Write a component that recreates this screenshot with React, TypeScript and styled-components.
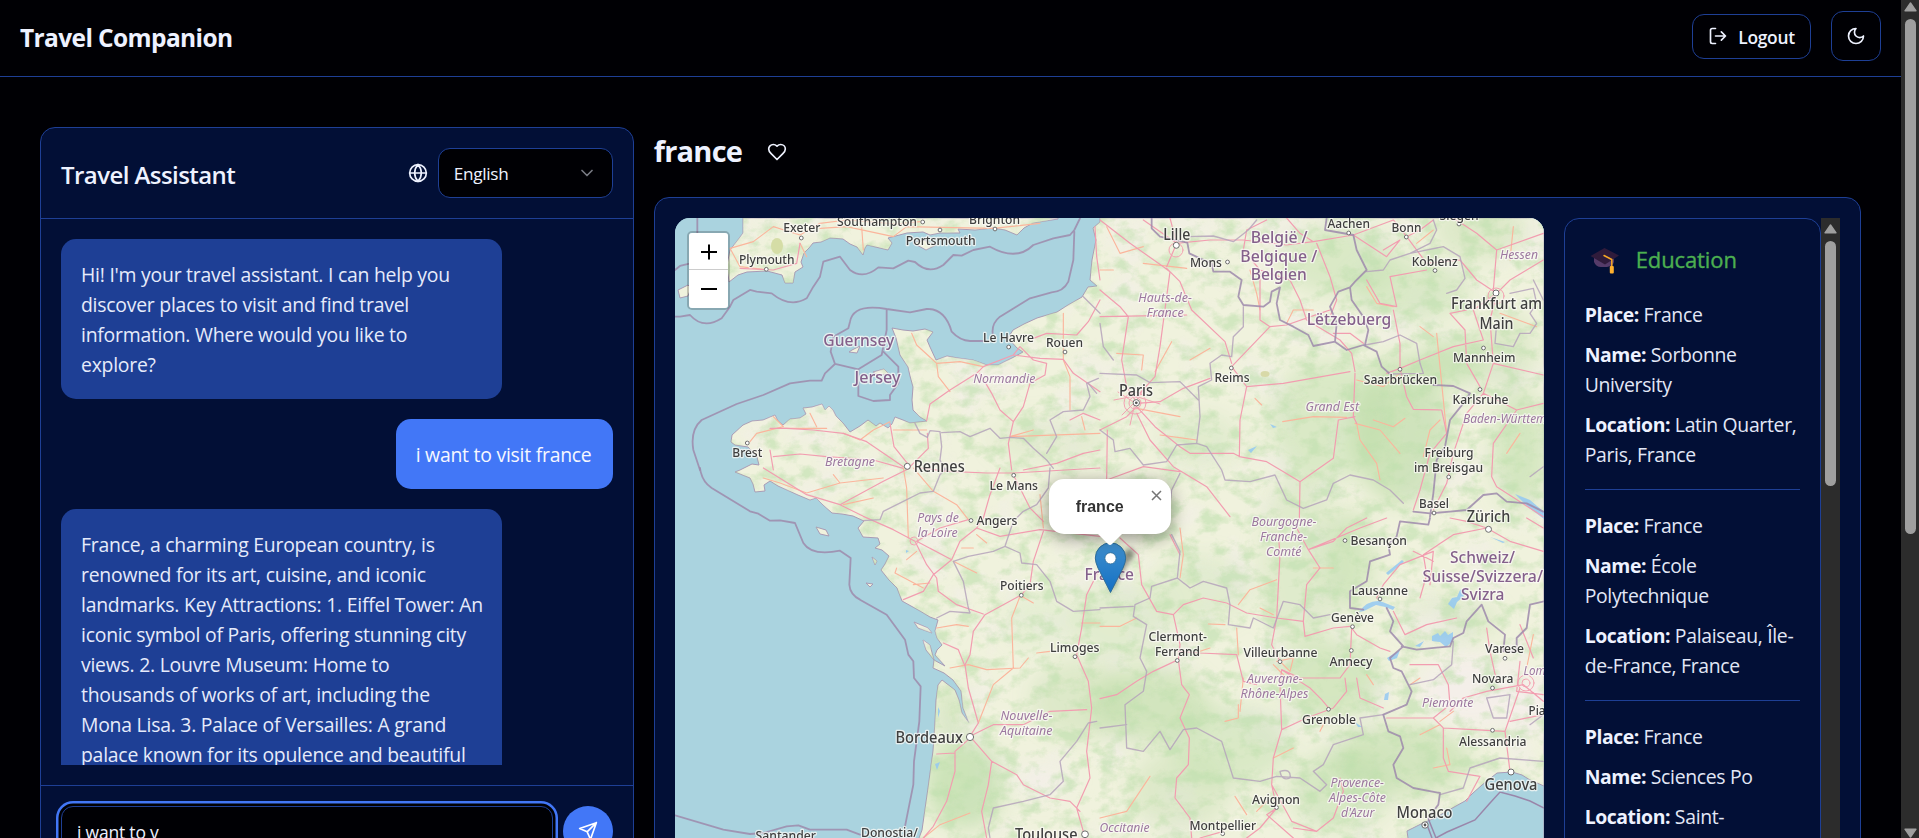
import React from "react";
import styled, { createGlobalStyle } from "styled-components";

const c = {
  bg: "#000004",
  card: "#020f36",
  border: "#1e3f95",
  primary: "#4277f7",
  text: "#eef2ff",
};

const GlobalStyle = createGlobalStyle`
  * { box-sizing: border-box; }
  body { margin: 0; background: ${c.bg}; overflow: hidden; color: ${c.text};
    font-family: "Open Sans", "Noto Sans", sans-serif; font-size: 19.4px; line-height: 30px; }
  p, h1, h2, h3 { margin: 0; }
`;

/* ---------- page frame ---------- */
const Window = styled.div`
  display: flex;
  height: 100vh;
  overflow: hidden;
`;
const Page = styled.div`
  flex: 1;
  min-width: 0;
`;
const Header = styled.header`
  display: flex;
  align-items: center;
  justify-content: space-between;
  height: 77px;
  padding: 0 20px 4px;
  border-bottom: 1px solid ${c.border};
`;
const Brand = styled.h1`
  font-size: 24.5px;
  font-weight: 700;
  line-height: 32px;
  letter-spacing: -0.62px;
  padding-top: 4px;
`;
const Actions = styled.div`
  display: flex;
  align-items: center;
  gap: 20px;
`;
const OutlineButton = styled.button<{ $square?: boolean }>`
  display: flex;
  align-items: center;
  justify-content: center;
  gap: 10px;
  width: ${(p) => (p.$square ? "50px" : "119px")};
  height: ${(p) => (p.$square ? "50px" : "45px")};
  padding: 0;
  border: 1px solid ${c.border};
  border-radius: 12px;
  background: transparent;
  color: ${c.text};
  font: 600 17.4px/25px "Open Sans", sans-serif;
  letter-spacing: -0.3px;
`;
const ButtonText = styled.span`
  padding-top: 2px;
`;
const Main = styled.main`
  display: grid;
  grid-template-columns: repeat(3, minmax(0, 1fr));
  column-gap: 20px;
  padding: 50px 40px 0;
`;

/* ---------- scroll bars ---------- */
const Track = styled.div<{ $w: number }>`
  flex: none;
  width: ${(p) => p.$w}px;
  display: flex;
  flex-direction: column;
  align-items: center;
  background: #2c2c2c;
`;
const Arrow = styled.svg<{ $top: number }>`
  flex: none;
  display: block;
  width: 13px;
  height: 10px;
  margin-top: ${(p) => p.$top}px;
`;
const Thumb = styled.div<{ $h: number }>`
  flex: none;
  width: 11px;
  height: ${(p) => p.$h}px;
  margin-top: 7px;
  border-radius: 6px;
  background: #9f9f9f;
`;
const Fill = styled.div`
  flex: 1;
`;
const UpArrow = ({ top }: { top: number }) => (
  <Arrow $top={top} viewBox="0 0 13 10">
    <path d="M6.5 1 12 8.8H1Z" fill="#9f9f9f" stroke="#9f9f9f" strokeWidth="1.4" strokeLinejoin="round" />
  </Arrow>
);

/* ---------- icons ---------- */
const Glyph = styled.svg<{ $dim?: boolean }>`
  flex: none;
  width: 20px;
  height: 20px;
  fill: none;
  stroke: currentColor;
  stroke-width: 2;
  stroke-linecap: round;
  stroke-linejoin: round;
  opacity: ${(p) => (p.$dim ? 0.5 : 1)};
`;
const Icon = ({ d, dim, children }: { d: string; dim?: boolean; children?: React.ReactNode }) => (
  <Glyph viewBox="0 0 24 24" $dim={dim}>
    <path d={d} />
    {children}
  </Glyph>
);

/* ---------- chat ---------- */
const Chat = styled.section`
  height: 760px;
  border: 1px solid ${c.border};
  border-radius: 15px;
  background: ${c.card};
`;
const ChatHead = styled.div`
  display: flex;
  align-items: center;
  height: 91px;
  padding: 0 20px;
  border-bottom: 1px solid ${c.border};
  gap: 10px;
`;
const ChatTitle = styled.h2`
  flex: 1;
  font-size: 24px;
  font-weight: 600;
  line-height: 32px;
  letter-spacing: -0.56px;
  padding-top: 4px;
`;
const Select = styled.div`
  display: flex;
  align-items: center;
  justify-content: space-between;
  width: 175px;
  height: 50px;
  padding: 0 15px;
  border: 1px solid ${c.border};
  border-radius: 12px;
  background: ${c.bg};
  font-size: 17.2px;
  letter-spacing: -0.3px;
`;
const SelectValue = styled.span`
  padding-top: 2px;
`;
const Messages = styled.div`
  display: flex;
  flex-direction: column;
  gap: 20px;
  height: 526px;
  margin: 20px;
  overflow: hidden;
`;
const Bubble = styled.div<{ $user?: boolean }>`
  flex: none;
  align-self: ${(p) => (p.$user ? "flex-end" : "flex-start")};
  width: ${(p) => (p.$user ? "217px" : "441px")};
  padding: 21px 20px 19px;
  border-radius: 15px;
  background: ${(p) => (p.$user ? c.primary : c.border)};
  color: ${(p) => (p.$user ? "#f6f8ff" : "#e6ebfb")};
  letter-spacing: -0.24px;
  white-space: pre;
`;
const Composer = styled.div`
  display: flex;
  gap: 10px;
  padding: 20px;
  border-top: 1px solid ${c.border};
`;
const Field = styled.div`
  flex: 1;
  height: 50px;
  padding: 11px 15px;
  border: 1px solid ${c.border};
  border-radius: 12px;
  background: ${c.bg};
  box-shadow: 0 0 0 2.5px ${c.bg}, 0 0 0 5px ${c.primary};
  font-size: 17.5px;
  line-height: 28px;
  letter-spacing: -0.2px;
`;
const Send = styled.button`
  display: flex;
  align-items: center;
  justify-content: center;
  width: 50px;
  height: 50px;
  padding: 0;
  border: 0;
  border-radius: 50%;
  background: ${c.primary};
  color: #fff;
`;

/* ---------- destination ---------- */
const Destination = styled.section`
  grid-column: span 2;
`;
const TitleRow = styled.div`
  display: flex;
  align-items: center;
  gap: 25px;
  height: 50px;
  margin-bottom: 20px;
`;
const PlaceTitle = styled.h2`
  width: 88px;
  padding-bottom: 2px;
  font-size: 29px;
  font-weight: 700;
  line-height: 40px;
  letter-spacing: -0.75px;
`;
const Card = styled.div`
  display: grid;
  grid-template-columns: repeat(4, minmax(0, 1fr));
  column-gap: 20px;
  height: 760px;
  padding: 20px;
  border: 1px solid ${c.border};
  border-radius: 15px;
  background: ${c.card};
`;
const MapBox = styled.div`
  position: relative;
  grid-column: span 3;
  overflow: hidden;
  border-radius: 15px;
  background: #aad3df;
`;
const MapSvg = styled.svg`
  display: block;
  width: 869px;
  height: 640px;
`;
const ZoomControl = styled.div`
  position: absolute;
  left: 12px;
  top: 13px;
  width: 43px;
  border: 2.5px solid rgba(0, 0, 0, 0.2);
  border-radius: 5px;
  background-clip: padding-box;
`;
const ZoomButton = styled.div`
  display: flex;
  align-items: center;
  justify-content: center;
  height: 38px;
  background: #fff;
  border-radius: 0 0 3px 3px;
  &:first-child { border-bottom: 1px solid #ccc; height: 37px; border-radius: 3px 3px 0 0; padding-top: 2px; }
  svg { width: 16px; height: 16px; margin-left: 1px; }
`;
const Popup = styled.div`
  position: absolute;
  left: 374px;
  top: 261px;
  width: 122px;
  height: 55px;
  padding: 18px 27px;
  border-radius: 15px;
  background: #fff;
  color: #333;
  font: 700 16px/20px "Liberation Sans", sans-serif;
  box-shadow: 0 4px 17px rgba(0, 0, 0, 0.4);
`;
const PopupTip = styled.svg`
  position: absolute;
  left: 49px;
  top: 55px;
  width: 24px;
  height: 11px;
`;
const PopupClose = styled.svg`
  position: absolute;
  left: 102px;
  top: 11px;
  width: 11px;
  height: 11px;
`;
const Info = styled.aside`
  display: flex;
  min-width: 0;
`;
const InfoCard = styled.div`
  flex: 1;
  min-width: 0;
  padding: 20px;
  border: 1px solid ${c.border};
  border-radius: 15px;
`;
const InfoHead = styled.h3`
  display: flex;
  align-items: center;
  gap: 15px;
  height: 40px;
  margin-bottom: 21px;
  padding-left: 4px;
  color: #4caf50;
  font-size: 22px;
  font-weight: 500;
  letter-spacing: -0.1px;
  -webkit-text-stroke: 0.35px #4caf50;
  svg { width: 32px; height: 32px; }
`;
const Entry = styled.div`
  display: flex;
  flex-direction: column;
  gap: 10px;
  padding-bottom: 19px;
  margin-bottom: 21px;
  border-bottom: 1px solid ${c.border};
  color: #e2e7f6;
`;
const Fact = styled.p`
  white-space: pre;
  letter-spacing: -0.32px;
  strong { color: ${c.text}; letter-spacing: -0.42px; }
`;

/* ---------- map data ---------- */
type Label = [string, number, number, number, number?];
const cities: Label[] = [
  ["Exeter", 783.3, 232, 37], ["Southampton", 837, 226.3, 80], ["Brighton", 969, 223.5, 51], ["Portsmouth", 905.7, 244.7, 70],
  ["Plymouth", 739, 264.3, 55.5], ["Le Havre", 983, 341.9, 51], ["Rouen", 1046, 346.5, 37], ["Brest", 732.3, 456.7, 30],
  ["Rennes", 913.7, 471.5, 51, 15.5], ["Lille", 1163.3, 239.5, 27, 15.5], ["Mons", 1190, 266.5, 32], ["Aachen", 1327.5, 228, 42.5],
  ["Bonn", 1391.5, 231.7, 30], ["Siegen", 1439.5, 219.5, 39], ["Koblenz", 1411.7, 266, 46], ["Frankfurt am", 1451, 309.3, 91, 15.5],
  ["Main", 1479.5, 328.7, 34, 15.5], ["Mannheim", 1453, 361.5, 62.5], ["Reims", 1214.5, 381.5, 35], ["Paris", 1119, 395.5, 34, 16],
  ["Saarbrücken", 1363.7, 384.3, 73.5], ["Karlsruhe", 1452.5, 403.5, 56], ["Freiburg", 1424.5, 456.5, 49], ["im Breisgau", 1414, 471.5, 69],
  ["Basel", 1419, 508.2, 30], ["Zürich", 1466.7, 522, 43.5, 15.5], ["Le Mans", 989.5, 489.5, 48.5], ["Angers", 976.5, 525, 41],
  ["Poitiers", 1000, 590, 43.5], ["Limoges", 1050, 652, 49.5], ["Bordeaux", 895.5, 742.6, 67.5, 15.5], ["Santander", 755.5, 839.5, 60.5],
  ["Donostia/", 861, 837, 57], ["Toulouse", 1015, 839.7, 62.5, 15.5], ["Besançon", 1350.5, 545, 56.5], ["Lausanne", 1351.5, 595, 56.5],
  ["Genève", 1331, 621.7, 43], ["Clermont-", 1148.5, 641.3, 58.5], ["Ferrand", 1155, 656, 45], ["Villeurbanne", 1243.5, 656.5, 74],
  ["Annecy", 1329.5, 666, 43], ["Grenoble", 1302, 724, 54], ["Varese", 1485, 653, 39], ["Novara", 1472, 683.2, 41.5],
  ["Piacenza", 1528.5, 714.8, 49], ["Alessandria", 1459, 746, 67.5], ["Genova", 1484.5, 789.5, 53, 16], ["Monaco", 1396.5, 818, 56, 16],
  ["Avignon", 1252, 803.5, 48], ["Montpellier", 1189.5, 830.2, 66.5],
];
const countries: Label[] = [
  ["Guernsey", 823.3, 345.5, 71], ["Jersey", 854.5, 383, 46], ["België /", 1250.7, 242.8, 57], ["Belgique /", 1240.3, 261.6, 77],
  ["Belgien", 1250.7, 280.2, 56], ["Lëtzebuerg", 1306.7, 325, 84.5], ["France", 1084.5, 580.3, 49.5], ["Schweiz/", 1450, 563, 65],
  ["Suisse/Svizzera/", 1422.5, 581.7, 120.5], ["Svizra", 1461, 600.3, 43.5],
];
const regions: Label[] = [
  ["Bretagne", 825, 466, 50], ["Normandie", 973.3, 383, 62], ["Hessen", 1500, 259, 38], ["Hauts-de-", 1138.3, 302, 53.5],
  ["France", 1146.7, 316.7, 37], ["Grand Est", 1305.5, 411, 53.5], ["Baden-Württemberg", 1463, 423, 108], ["Pays de", 917.3, 522, 41.5],
  ["la Loire", 917.7, 536.8, 40], ["Nouvelle-", 1000.5, 720, 52], ["Aquitaine", 1000, 734.8, 52.5], ["Bourgogne-", 1251.5, 526, 65],
  ["Franche-", 1260, 541, 47], ["Comté", 1266, 555.8, 35.5], ["Auvergne-", 1247, 683.2, 55.5], ["Rhône-Alpes", 1240.5, 698, 68],
  ["Lombardia", 1523.5, 675, 56], ["Piemonte", 1422, 706.5, 51.5], ["Provence-", 1330.5, 787, 53.5], ["Alpes-Côte", 1329, 801.8, 57],
  ["d'Azur", 1341, 816.5, 33.5], ["Occitanie", 1099.5, 832, 50],
];
const dots: [number, number, number?][] = [
  [801.3, 238], [922.7, 222], [940, 230], [995, 229], [766.3, 269.3], [1008.7, 347], [1065, 352], [747.3, 443], [907.3, 466.3, 3],
  [1176.3, 245.3, 3], [1227.5, 262], [1348.7, 233], [1406.3, 237], [1459, 224], [1435, 270.5], [1496, 293, 3], [1483.5, 348],
  [1231.3, 368], [1400, 369.3], [1480, 389.5], [1448.7, 477], [1434, 513], [1488.5, 529.3, 3], [1013.7, 475.3], [971, 520.5],
  [1021.3, 595.3], [1075, 656.7], [970, 737, 3.6], [1085, 834.3, 3.4], [1345, 540.5], [1380, 599], [1352.5, 626.7], [1177.3, 660.5],
  [1280, 661.7], [1351.3, 650.5], [1328.5, 709.3], [1505, 658.3], [1492.5, 688], [1492.5, 730.3], [1511, 772, 3], [1276.5, 807.5], [1222.7, 833.7],
];

const coast =
  "M1100 218V222L1093 228 1096 240 1092 260 1090 280 1097 286 1088 287 1082 297 1068 305 1057 312 1037 318 1024 324 1013 330 1008 338 1017 348 1023 352 1012 358 998 365 987 365 973 360 958 358 947 356 936 360 930 347 927 340 933 332 925 329 913 331 903 330 892 328 896 338 900 355 908 367 910 376 913 387 912 400 913 410 920 417 927 421 910 423 903 420 895 417 892 424 888 428 880 423 876 426 868 420 860 426 850 432 843 423 836 416 833 410 829 406 825 410 822 404 812 407 803 408 806 414 800 418 790 419 783 425 778 421 775 415 763 420 752 421 743 425 732 435 731 442 735 445 748 447 757 457 759 465 752 464 740 470 735 472 750 478 753 484 755 492 765 491 764 485 770 481 778 486 787 490 798 495 810 500 816 498 823 505 832 513 842 514 853 516 864 521 858 528 863 537 878 538 880 544 875 548 882 550 889 556 885 564 881 570 889 580 897 588 902 601 911 606 920 611 930 617 938 620 935 631 937 638 942 645 937 650 935 655 945 666 934 660 933 668 944 673 953 680 961 691 963 708 969 723 962 713 959 700 955 690 942 680 938 685 936 700 935 721 933 751 928 788 922 830 919 838V860H1544V218Z";
const britain =
  "M743 218V233L737 241 730 250 727 265 729 282 738 275 747 272 767 271 782 275 785 283 793 283 795 272 803 267 801 262 804 253 809 248 813 243 821 242 830 238 843 239 850 244 857 247 863 255 865 248 867 245 888 250 892 243 888 238 907 233 923 232 930 235 940 233 960 233 958 229 975 230 993 228 1005 230 1017 235 1024 228 1033 223 1058 219V218ZM678 290 688 285 691 288 688 296 680 298ZM913 243 924 240 936 245 926 250ZM873 372 884 369 889 374 878 375ZM852 350 860 346 857 353 849 352ZM816 527 826 530 829 536 820 534ZM866 583 873 584 870 587ZM872 557 877 561 875 565ZM914 622 928 628 932 633 918 628ZM923 640 930 645 934 660 926 650Z";

/* Line work is kept per map sheet, each on its own grid of thirds. */
type Sheet = { at: [number, number]; border: string; heavy: string; pink: string; orange: string };
const sheets: Sheet[] = [
  {
    at: [640, 100],
    heavy:
      "M105 650H120L150 645Q190 690 245 655L270 620 280 600 330 570 350 575 395 580Q450 625 500 595L520 560 540 530 550 485 600 470 630 510Q670 540 715 502L760 505 805 482 825 486Q865 525 910 495L940 465 965 467 1000 450 1050 440Q1130 485 1180 435L1240 415 1290 405 1303 390 1320 355M1303 395 1300 480 1285 545Q1270 575 1235 577L1170 595 1080 650Q1055 670 1058 700M1030 723H990Q960 722 935 695Q915 625 860 627L810 637 740 627Q640 610 630 665L625 685 580 710 572 755 585 792 655 808 725 765 740 690V627M585 792 555 820 545 842 510 842 450 850 370 885 290 912 185 960Q150 990 160 1050L180 1110M655 808V888L700 903 750 900V885L775 850V800L730 755M172 353V400M105 510 120 498 145 492",
    border:
      "M825 970 840 1000 862 1012 870 992 900 995 905 1040 900 1080 915 1110M905 998 960 995 990 1010 1050 985 1080 1015 1110 1012 1150 1015 1180 1045 1220 1080 1240 1105M1220 1060 1250 1010 1230 960 1270 935 1330 930 1350 890 1340 850 1375 835M1330 590 1380 640M1345 850 1370 880",
    pink:
      "M1380 1050 1330 1060 1250 1090 1150 1110M860 962 870 912 930 870 1010 820 1030 800 1120 765 1200 775 1270 778 1300 820 1380 875M1180 715 1220 700 1310 705 1345 665 1380 600M1120 765 1140 740 1180 780 1220 790 1215 825 1170 850 1150 920 1120 965 1105 1030 1115 1110M1020 820 1055 880 1080 930 1120 965M862 1000 865 1045 805 1105M750 970 762 1040 810 1100M390 985 440 985 520 990 610 1000 680 1025 790 1100M390 1050 400 1110M400 1070 480 1062 560 1070 700 1080 790 1105M1365 380 1370 470 1380 540M480 430 470 490 400 510 300 505M1290 960 1330 940 1380 960",
    orange:
      "M270 445 340 425 400 380 480 405 540 370 620 360 770 372 840 365M270 445 300 500 370 508M480 430 500 470M540 385 620 380 760 410 800 380 1060 385 1200 370M665 380 670 450M815 700 830 735 890 790 895 830 930 875M890 790 960 785 1030 800M330 1025 350 1000 430 980 400 950M430 985 560 985M510 940 530 980M610 1000 660 1020 700 990 750 965M1270 640V780L1290 830V930M760 990H860M1380 1000 1110 1010 1180 990M1325 950 1335 990",
  },
  {
    at: [1100, 200],
    heavy:
      "M155 54V85L180 110 262 128 268 160 300 175 335 190 340 215 390 215 425 240 415 290 430 315 490 320 510 305 515 275 540 262 530 310 540 360 580 380 625 405 640 438 705 425 740 450 790 435 830 455 845 500 870 522M680 54 675 90 760 105 770 150 800 210 765 245 750 262 715 275 690 320 710 370 705 425M750 262 755 300 790 350 805 390 795 435M1000 555 1060 558 1110 580 1090 610 1050 660 1035 740 1010 780 1000 880 990 950M940 935 990 940 1050 935 1100 930 1150 885 1190 880 1220 905 1280 910 1330 935",
    border:
      "M430 320V380L400 410 395 470 365 465 330 490 335 540 295 560 300 650 290 730 320 740 365 810 375 840 450 845 525 825 560 900 610 925 680 900 700 850 750 825 820 840 870 870 910 910M0 520 110 525 150 548 240 545 295 600M0 690 40 720 45 755 90 745 130 795 200 785 230 735 290 730M265 110 340 108 400 125 445 90 470 60M800 215 850 210 870 180 930 160 990 130 1010 90 1000 60M930 160 1030 140 1080 170 1095 235 1070 270 1040 280M795 435 850 425 900 405 950 430 960 490 970 520 870 522M1230 280 1300 265 1310 310 1290 340 1310 370 1290 400 1260 400 1240 440 1185 430 1190 370M1300 240 1330 300M0 370 10 440 40 480M240 820 215 870 205 960M1330 800 1290 830",
    pink:
      "M0 60 90 130 190 200 210 215 200 290 180 440 165 530 110 590M200 205 240 245 275 330 375 425 395 490M0 350 260 345M0 270 60 320 85 350 65 480 80 560 105 600M395 500 440 560 550 550 750 515M395 500 510 380 560 375 660 340 690 330M110 610 180 605 250 565 330 535M440 560 420 660 418 770 500 785 600 845 700 775 715 660 765 650M110 620 165 680 240 740 270 760 400 760 420 770M0 690 80 650 110 620M110 640 150 720 220 800 320 860 390 950M22 690 20 840 130 800 240 815M600 845 598 960M765 520 760 650 770 670M765 515 755 460 720 420 620 360 600 300 570 240 480 210 430 150 440 90 500 60M480 220 480 360 510 380M650 130 690 230 710 300 690 350M200 200 230 130 330 120 430 120 560 135 640 125 760 105M640 125 600 100 560 54M230 130 210 54M230 130 130 60M760 105 860 170 900 120 850 150M760 105 880 60 920 110 960 90 1000 60M920 110 980 190 1080 180 1130 240 1190 280 1230 240 1330 180M800 240 840 310 890 320 870 230 980 210M860 520 900 505 960 480 1060 440 1150 420 1120 330 1190 280M900 505 900 430 880 330M900 505 920 590 940 628 1025 630 1040 700 990 760 960 870 940 930M1190 280 1170 360 1180 490 1150 580 1100 640 1060 760 1040 850 1000 930M1180 490 1330 525M1150 580 1250 630 1180 730 1175 830 1190 860 1330 950M1330 610 1250 630M1190 150 1180 270M1060 54 1130 100 1190 150 1330 100M1100 330 1050 340 1095 390 1100 490 1140 560M700 400 750 400 790 430",
    orange:
      "M50 460 130 465 125 510M165 515 215 425M270 480 330 445M548 665 640 650 740 652M765 670 840 690 900 760M770 670 780 720 830 790 840 840M110 625 240 650M180 705 290 720M20 80 60 160 130 140M130 190 260 205M450 210 470 280 480 330M560 370 580 330 640 330M800 260 830 310 880 320M770 540 850 560 900 520M1230 180 1240 80M1010 400 1040 700M1200 340 1310 380M1260 700 1220 760M960 380 1000 410M465 595 485 615M820 660 880 680 915 655M1000 90 950 130M40 210H0M1020 660 990 690 970 770",
  },
  {
    at: [640, 468],
    heavy:
      "M180 0Q185 40 215 60L330 130 355 137 390 158 420 157 465 165 490 225Q515 265 600 248L632 270 628 350Q630 380 660 395L740 440 795 515 805 560 820 580 822 630 842 655 838 760 822 880 820 950 795 1075M660 1100 620 1085 510 1085 475 1072 440 1075 370 1095 330 1098 250 1085 105 1042",
    border:
      "M920 0 900 20 880 70 840 75 790 100 730 130 720 155 670 158M1230 0 1225 60 1190 110 1150 130 1120 160 1095 235 1060 250 985 265 940 280 970 340 985 420 990 435 930 430 890 450M1095 235 1140 255 1145 285 1190 290 1230 340 1250 400 1300 430 1380 425M1370 760 1345 765 1310 820 1260 880 1270 940 1230 980 1150 1000 1060 1020 1045 1080 1050 1110",
    pink:
      "M840 0 925 10 1040 15 1120 15 1380 0M1080 0 1050 80 1030 150 1010 180M370 0 500 80 600 110M810 0 730 40 600 110 670 145 760 185 825 220 860 290 890 330 895 370 950 410 1030 438M830 220 935 275 960 220 1010 180M935 275 880 320 850 370 790 395M830 220 900 180 985 155M1010 180 1080 205 1200 185 1380 205M1210 190 1180 280 1170 350 1145 380 1035 440 1000 490 990 560 975 590 985 660 1015 765 990 805M1380 300 1340 380 1325 480 1310 560 1345 640 1355 720 1340 850 1350 930 1310 1020 1330 1090M910 525 955 545 975 595M990 805 1060 770 1150 770 1230 730 1340 725M990 805 1055 880 1130 920 1150 950 1230 990 1290 1000 1320 1030M985 815 945 850 945 910 920 1000 880 1075 850 1110M1055 880 1045 950 1025 1030 1040 1110M945 855 890 858M1120 20 1170 120 1210 160",
    orange:
      "M370 30 420 45 500 75 600 45 730 30M580 20 600 45M790 0 800 60 805 210M820 0 880 70 950 110 985 155M610 110 700 90M800 275 830 250M770 300 765 315 850 360M820 350 870 345M890 480 950 470 985 475M1140 385 1115 450 1120 600 1060 650 1015 765M930 600 985 590 1040 605 1140 600 1165 570M850 1110 900 1070 990 1035M940 280 1010 315M965 240H1000M1190 555 1230 550M1325 465H1380M1145 385 1180 405M1010 200 1040 225M1200 80 1210 180",
  },
  {
    at: [1100, 518],
    heavy:
      "M990 0 985 20 900 10 890 55 865 80 870 110 810 130 800 190 750 220 750 270 790 275M860 270 880 310 870 340 910 385 870 420 880 450 905 460 935 520 920 560 850 590 865 640 900 655 910 690 880 740 890 780 940 810 1020 825M905 385 950 395 1050 385 1060 360 1090 345 1100 310 1145 260 1165 310 1215 350 1210 400 1250 400 1250 360 1280 330 1290 260 1332 250M1020 825 1015 860 985 900",
    border:
      "M215 50 240 100 232 180 155 205 150 240 105 260 100 295 140 320 120 420 140 460 130 520 75 560 80 690 130 700 180 640 210 695 250 635M0 270 100 265M232 180 270 210 310 190 380 210 390 260 385 320 450 330 460 300 520 330 550 250 600 260 640 300 690 290M250 635 290 630 365 670 400 780 480 790 530 775 600 780 660 820 680 800 640 760 670 740 700 680 790 650 780 600 850 590M0 630 80 620M540 760Q575 750 570 780Q545 790 540 760M1060 370 1055 440 1000 485 930 500M1160 540 1180 600 1220 600 1230 530 1160 540M1020 830 1090 810 1110 750 1200 720 1330 730M1290 620 1330 590",
    pink:
      "M60 60 115 110 125 200 170 280 220 290 240 380 235 425M220 290 250 260 310 240 380 255 440 285 530 300 610 310 620 200 660 150 625 95 590 30M530 300 540 110 535 50M530 300 515 380 540 430M610 310 615 355 700 330 750 325M235 425 160 460 110 490 50 530 0 542M235 425 245 500 268 530 240 600 268 660 265 740 230 780 225 840 270 900 275 960M235 400 300 405 410 410 430 490 470 500M625 95 700 70 740 30 800 0M625 95 780 30 860 0M545 455 600 480 720 480 750 440 755 330 770 350 840 390 870 400M545 455 630 510 665 545 690 575M735 480 740 520 700 570 620 600 545 635 540 500 545 455M545 635 520 720 515 800 530 870 480 930 440 960M515 800 575 910 650 940 700 900 730 820 720 780M530 870 500 890 580 960M770 480 780 540 850 570M650 940 580 930M370 940 300 960M210 50 240 110M915 350 980 320 1070 300M915 350 880 280M930 440 1015 440 1045 500 1050 560 1000 600 860 600M1050 580 1090 540 1160 520 1270 500M1000 600 1030 630 1120 635 1215 640 1260 510M1030 630 1030 720 1045 760 1140 775 1100 850M1215 640 1230 760M1190 490 1170 400 1160 330M1270 500 1330 550M1260 430 1250 520 1330 530M1230 610 1330 590M960 240 980 170 970 110 1060 50 1160 30M1160 30 1230 70 1330 100M1160 30 1100 10 1050 0M990 200 1000 100 900 140 850 200 830 240M1260 320 1300 420M940 100 1000 130M1280 0 1330 30",
    orange:
      "M0 325 60 325 110 300M415 260 450 215 530 185M325 318 375 320M240 30 250 110 240 180M480 270 520 290M300 400 330 390M410 330 415 410M415 560 415 600 375 610M430 480 420 580M800 470 820 500M960 650 1020 620M1000 750 1050 740 1040 690M0 900 80 880 150 775M530 430 580 420 570 460 540 430M405 835 440 890M640 150 700 150M1300 350 1280 450M660 640 680 600M470 880 500 850M520 440 560 480M930 500 960 480M1060 580 1020 610M520 720 580 690",
  },
];

const lakes =
  "M1359 612Q1367 600 1380 601L1395 607 1393 610Q1384 606 1376 605L1364 611ZM1386 573 1402 560 1404 562 1388 575ZM1448 604 1452 598 1457 597 1460 590 1466 588 1464 596 1457 602 1454 609ZM1432 636 1438 633 1440 636 1445 631 1448 635 1453 632 1453 641 1446 647 1440 642 1432 641ZM1415 646 1424 641 1420 647ZM1387 658 1400 650 1397 658 1389 661ZM1384 700 1385 694 1389 692 1388 700ZM1515 494 1530 500 1544 512 1544 519 1528 507ZM1248 450 1257 446 1251 453ZM1270 424 1277 427 1273 428ZM1490 537 1505 542 1503 543ZM1355 722 1362 727 1358 727ZM906 550 909 551 906 553ZM935 764 940 762 937 770ZM938 707 940 711 938 718Z";

const woods: [number, number, number, number, number][] = [
  [1400, 430, 48, 75, 0.6], [1452, 362, 34, 22, 0.65], [1330, 420, 60, 60, 0.4], [1340, 260, 60, 35, 0.4], [1410, 290, 60, 30, 0.4],
  [1520, 450, 28, 60, 0.5], [1200, 440, 40, 28, 0.25], [1300, 560, 40, 90, 0.3], [1150, 705, 60, 38, 0.55], [1350, 560, 24, 50, 0.5],
  [1330, 680, 50, 40, 0.5], [1400, 760, 70, 36, 0.55], [1230, 745, 60, 40, 0.4], [965, 785, 40, 44, 0.65], [950, 715, 12, 34, 0.5],
  [1080, 700, 50, 40, 0.35], [1120, 620, 50, 40, 0.25], [1450, 620, 50, 24, 0.3], [1200, 590, 50, 36, 0.25], [1505, 350, 30, 40, 0.35],
  [1050, 440, 60, 24, 0.22], [1340, 790, 50, 40, 0.45], [1480, 230, 46, 30, 0.35], [1180, 790, 50, 40, 0.35], [1040, 620, 36, 28, 0.18],
];

function Labels({ items, fill, size, italic }: { items: Label[]; fill: string; size: number; italic?: boolean }) {
  return (
    <g fill={fill} fontSize={size} fontWeight={italic ? 400 : 500} fontStyle={italic ? "italic" : "normal"} stroke="#fbfaf5" strokeOpacity={0.75} strokeWidth={2.6} strokeLinejoin="round" paintOrder="stroke">
      {items.map(([t, x, y, w, s]) => (
        <text key={t + y} x={x} y={y} textLength={w} lengthAdjust="spacingAndGlyphs" fontSize={s ?? size}>
          {t}
        </text>
      ))}
    </g>
  );
}

function FranceMap() {
  return (
    <MapSvg viewBox="675 218 869 640" fontFamily='"Noto Sans", "Open Sans", sans-serif'>
      <defs>
        <clipPath id="land">
          <path d={coast} />
          <path d={britain} />
        </clipPath>
        <filter id="forest" x="0" y="0" width="100%" height="100%" colorInterpolationFilters="sRGB">
          <feTurbulence type="fractalNoise" baseFrequency="0.05 0.07" numOctaves="5" seed="11" />
          <feColorMatrix values="0 0 0 0 0.75  0 0 0 0 0.875  0 0 0 0 0.68  0 3.4 0 0 -1.55" />
        </filter>
        <filter id="heath" x="0" y="0" width="100%" height="100%" colorInterpolationFilters="sRGB">
          <feTurbulence type="fractalNoise" baseFrequency="0.02" numOctaves="4" seed="4" />
          <feColorMatrix values="0 0 0 0 0.95  0 0 0 0 0.935  0 0 0 0 0.91  4 0 0 0 -2" />
        </filter>
        <filter id="soft" x="-30%" y="-30%" width="160%" height="160%">
          <feGaussianBlur stdDeviation="10" />
        </filter>
        <linearGradient id="pin" x1="0" y1="0" x2="0" y2="1">
          <stop offset="0" stopColor="#3f8fcd" />
          <stop offset="1" stopColor="#1470c4" />
        </linearGradient>
        <filter id="pinShadow" x="-50%" y="-50%" width="200%" height="200%">
          <feGaussianBlur stdDeviation="2.5" />
        </filter>
      </defs>
      <rect x="675" y="218" width="869" height="640" fill="#aad3df" />
      <g fill="#f0f2dd" stroke="#a99bb5" strokeWidth="1">
        <path d={coast} />
        <path d={britain} />
      </g>
      <g clipPath="url(#land)">
        <rect x="675" y="218" width="869" height="640" filter="url(#heath)" opacity="0.6" />
        <g fill="#b9dba4" filter="url(#soft)">
          {woods.map(([x, y, rx, ry, o]) => (
            <ellipse key={`${x}-${y}`} cx={x} cy={y} rx={rx} ry={ry} opacity={o} />
          ))}
        </g>
        <g fill="#f4efe9" filter="url(#soft)">
          <ellipse cx="1470" cy="690" rx="52" ry="38" />
          <ellipse cx="1425" cy="625" rx="30" ry="15" opacity=".8" />
          <ellipse cx="1530" cy="700" rx="30" ry="26" />
          <ellipse cx="1040" cy="780" rx="34" ry="16" opacity=".7" />
        </g>
        <rect x="675" y="218" width="869" height="640" filter="url(#forest)" opacity="0.6" />
        <ellipse cx="777" cy="246" rx="6" ry="8" fill="#d5dda6" />
        <ellipse cx="1265" cy="374" rx="4.5" ry="3" fill="#d8d9a8" />
      </g>
      <path d="M1408 860V838L1407 831 1423 823 1435 818 1447 811 1465 801 1473 793 1482 785 1497 773 1512 772 1522 775 1530 780 1544 786V860Z" fill="#aad3df" stroke="#a99bb5" />
      <path d="M1436 838 1447 832 1475 820 1490 803 1500 792 1515 796 1530 801 1544 808M1436 838 1428 818M1432 838 1426 822" fill="none" stroke="#9a86aa" strokeWidth="1.5" />
      <path d={lakes} fill="#93c8f2" opacity="0.85" />
      <g fill="none" strokeLinejoin="round" strokeLinecap="round">
        {sheets.map((s) => (
          <g key={s.at.join()} transform={`translate(${s.at[0]} ${s.at[1]}) scale(0.33333)`}>
            <path d={s.orange} stroke="#fbb59c" strokeWidth="3.4" />
            <path d={s.pink} stroke="#f29db0" strokeWidth="3.6" />
            <path d={s.border} stroke="#b5a3bb" strokeWidth="4" opacity=".85" />
            <path d={s.heavy} stroke="#9d8aac" strokeWidth="5.4" opacity=".85" />
          </g>
        ))}
        <g stroke="#f2a2b1" strokeWidth="1">
          <circle cx="1135" cy="403" r="6" />
          <circle cx="1135" cy="403" r="11" />
          <path d="M1114 400 1135 396 1160 404M1122 415 1135 402 1145 388M1118 392 1135 403 1130 425" />
          <circle cx="1176" cy="250" r="7" />
          <circle cx="1526" cy="683" r="8" />
          <circle cx="1526" cy="683" r="4" />
          <circle cx="914" cy="541" r="4" />
          <circle cx="1496" cy="296" r="8" />
        </g>
      </g>
      <g fill="#fff" stroke="#6c6c6c" strokeWidth="1">
        {dots.map(([x, y, r]) => (
          <circle key={`${x}-${y}`} cx={x} cy={y} r={r ?? 1.9} />
        ))}
        <circle cx="1136.3" cy="402.8" r="3.2" />
        <circle cx="1425" cy="825" r="3.2" />
      </g>
      <g fill="#555">
        <circle cx="1136.3" cy="402.8" r="1.4" />
        <circle cx="1425" cy="825" r="1.4" />
      </g>
      <Labels items={regions} fill="#9c789f" size={12.9} italic />
      <Labels items={cities} fill="#3f3f3f" size={13.2} />
      <Labels items={countries} fill="#84608b" size={15.8} />
      <path d="M1110 593 1128 563Q1140 552 1130 548L1114 560Z" fill="#000" opacity=".4" filter="url(#pinShadow)" />
      <path d="M1110.5 592.5 1098 568Q1095.3 562 1095.3 558A15.2 15.2 0 0 1 1125.7 558Q1125.7 562 1123 568Z" fill="url(#pin)" stroke="#2e6c97" strokeWidth="1" />
      <circle cx="1110.5" cy="558.3" r="5.6" fill="#fff" stroke="#2e6c97" strokeWidth=".8" />
    </MapSvg>
  );
}

const places: { name: string; location: string }[] = [
  { name: "Sorbonne\nUniversity", location: "Latin Quarter,\nParis, France" },
  { name: "École\nPolytechnique", location: "Palaiseau, Île-\nde-France, France" },
  { name: "Sciences Po", location: "Saint-" },
];

const greeting = "Hi! I'm your travel assistant. I can help you\ndiscover places to visit and find travel\ninformation. Where would you like to\nexplore?";
const answer =
  "France, a charming European country, is\nrenowned for its art, cuisine, and iconic\nlandmarks. Key Attractions: 1. Eiffel Tower: An\niconic symbol of Paris, offering stunning city\nviews. 2. Louvre Museum: Home to\nthousands of works of art, including the\nMona Lisa. 3. Palace of Versailles: A grand\npalace known for its opulence and beautiful";

export default function App() {
  return (
    <Window>
      <GlobalStyle />
      <Page>
        <Header>
          <Brand>Travel Companion</Brand>
          <Actions>
            <OutlineButton>
              <Icon d="M9 21H5a2 2 0 0 1-2-2V5a2 2 0 0 1 2-2h4M16 17l5-5-5-5M21 12H9" />
              <ButtonText>Logout</ButtonText>
            </OutlineButton>
            <OutlineButton $square>
              <Icon d="M12 3a6 6 0 0 0 9 9 9 9 0 1 1-9-9Z" />
            </OutlineButton>
          </Actions>
        </Header>
        <Main>
          <Chat>
            <ChatHead>
              <ChatTitle>Travel Assistant</ChatTitle>
              <Icon d="M12 2a14.5 14.5 0 0 0 0 20 14.5 14.5 0 0 0 0-20M2 12h20">
                <circle cx="12" cy="12" r="10" />
              </Icon>
              <Select>
                <SelectValue>English</SelectValue>
                <Icon d="m6 9 6 6 6-6" dim />
              </Select>
            </ChatHead>
            <Messages>
              <Bubble>{greeting}</Bubble>
              <Bubble $user>i want to visit france</Bubble>
              <Bubble>{answer}</Bubble>
            </Messages>
            <Composer>
              <Field>i want to v</Field>
              <Send>
                <Icon d="m22 2-7 20-4-9-9-4ZM22 2 11 13" />
              </Send>
            </Composer>
          </Chat>
          <Destination>
            <TitleRow>
              <PlaceTitle>france</PlaceTitle>
              <Icon d="M19 14c1.49-1.46 3-3.21 3-5.5A5.5 5.5 0 0 0 16.5 3c-1.76 0-3 .5-4.5 2-1.5-1.5-2.74-2-4.5-2A5.5 5.5 0 0 0 2 8.5c0 2.3 1.5 4.05 3 5.5l7 7Z" />
            </TitleRow>
            <Card>
              <MapBox>
                <FranceMap />
                <ZoomControl>
                  <ZoomButton>
                    <svg viewBox="0 0 16 16"><path d="M8 .5v15M0 8h16" stroke="#000" strokeWidth="2" /></svg>
                  </ZoomButton>
                  <ZoomButton>
                    <svg viewBox="0 0 16 16"><path d="M0 8h16" stroke="#000" strokeWidth="2" /></svg>
                  </ZoomButton>
                </ZoomControl>
                <Popup>
                  france
                  <PopupTip viewBox="0 0 24 11"><path d="M0 0H24L14 10Q12 12 10 10Z" fill="#fff" /></PopupTip>
                  <PopupClose viewBox="0 0 11 11"><path d="M1 1 10 10M10 1 1 10" stroke="#757575" strokeWidth="1.5" /></PopupClose>
                </Popup>
              </MapBox>
              <Info>
                <InfoCard>
                  <InfoHead>
                    <svg viewBox="0 0 32 32">
                      <path d="M5 13V19Q7 24 12 24H18Q24 23 25 19V13Z" fill="#553b69" />
                      <path d="M1.5 13 15.5 5 30 12.5 16 21.5Z" fill="#2f1b3b" />
                      <path d="M15 12.5 22.8 16.5V25" fill="none" stroke="#f9a825" strokeWidth="1.5" strokeLinecap="round" />
                      <rect x="20.8" y="23" width="4" height="7.5" rx="1" fill="#ffb02e" />
                    </svg>
                    Education
                  </InfoHead>
                  {places.map((p) => (
                    <Entry key={p.name}>
                      <Fact><strong>Place:</strong> France</Fact>
                      <Fact><strong>Name:</strong> {p.name}</Fact>
                      <Fact><strong>Location:</strong> {p.location}</Fact>
                    </Entry>
                  ))}
                </InfoCard>
                <Track $w={19}>
                  <UpArrow top={6} />
                  <Thumb $h={245} />
                </Track>
              </Info>
            </Card>
          </Destination>
        </Main>
      </Page>
      <Track $w={18}>
        <UpArrow top={2} />
        <Thumb $h={515} />
        <Fill />
        <Arrow $top={0} viewBox="0 0 13 10">
          <path d="M6.5 9 12 1.2H1Z" fill="#9f9f9f" stroke="#9f9f9f" strokeWidth="1.4" strokeLinejoin="round" />
        </Arrow>
      </Track>
    </Window>
  );
}
